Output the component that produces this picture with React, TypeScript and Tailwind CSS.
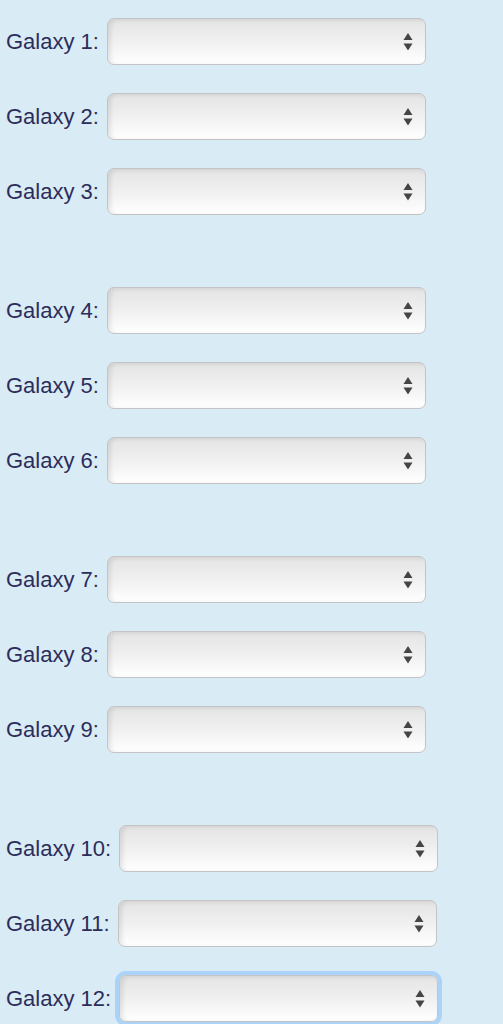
import React from "react";

const groups = [
  [1, 2, 3],
  [4, 5, 6],
  [7, 8, 9],
  [10, 11, 12],
];

function Arrows() {
  return (
    <svg
      width="10"
      height="19"
      viewBox="0 0 10 19"
      className="pointer-events-none absolute right-[13px] top-1/2 -translate-y-1/2"
    >
      <path d="M5 0.5 L9.5 7.5 L0.5 7.5 Z" fill="#454545" />
      <path d="M0.5 11 L9.5 11 L5 18 Z" fill="#454545" />
    </svg>
  );
}

function GalaxyRow({ n, focused }: { n: number; focused?: boolean }) {
  return (
    <div className="flex items-center">
      <label
        htmlFor={`galaxy-${n}`}
        className="mr-[8px] text-[22px] leading-none text-[#2c2d5b]"
        style={{ fontFamily: '"Liberation Sans", Arial, sans-serif' }}
      >
        Galaxy {n}:
      </label>
      <div
        className={
          "relative h-[47px] w-[319px] rounded-[7px] " +
          (focused ? "ring-4 ring-[#abd2f7]" : "")
        }
      >
        <select
          id={`galaxy-${n}`}
          className="h-full w-full appearance-none rounded-[7px] border border-[#c4c4c4] bg-linear-to-b from-[#e4e4e4] via-[#f0f0f0] to-white shadow-[inset_3px_1px_4px_rgba(0,0,0,0.09)] outline-none"
        >
          <option value="" />
        </select>
        <Arrows />
      </div>
    </div>
  );
}

export default function App() {
  return (
    <div className="min-h-[1024px] w-full bg-[#d9ebf5] pl-[6px] pt-[18px]">
      <div className="flex flex-col gap-[72px]">
        {groups.map((g, gi) => (
          <div key={gi} className="flex flex-col gap-[28px]">
            {g.map(n => (
              <GalaxyRow key={n} n={n} focused={n === 12} />
            ))}
          </div>
        ))}
      </div>
    </div>
  );
}
